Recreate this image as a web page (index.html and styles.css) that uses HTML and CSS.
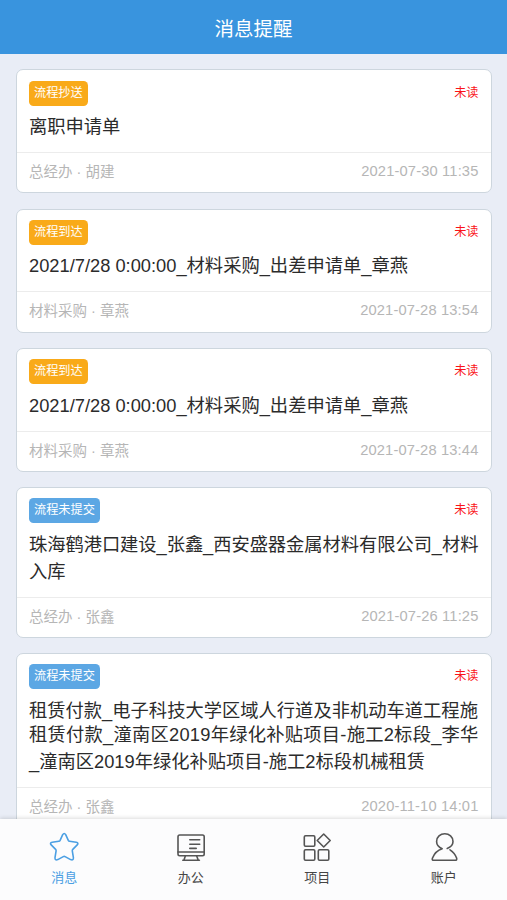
FILE: index.html
```
<!DOCTYPE html>
<html lang="zh-CN">
<head>
<meta charset="utf-8">
<title>消息提醒</title>
<link rel="stylesheet" href="styles.css">
</head>
<body>
<div class="app">
  <header class="header"><h1>消息提醒</h1></header>
  <main class="list">
    <article class="card">
      <div class="body">
        <div class="top"><span class="badge">流程抄送</span><span class="unread">未读</span></div>
        <div class="title"><p>离职申请单</p></div>
      </div>
      <div class="meta"><span>总经办 · 胡建</span><time>2021-07-30 11:35</time></div>
    </article>
    <article class="card">
      <div class="body">
        <div class="top"><span class="badge">流程到达</span><span class="unread">未读</span></div>
        <div class="title"><p>2021/7/28 0:00:00_材料采购_出差申请单_章燕</p></div>
      </div>
      <div class="meta"><span>材料采购 · 章燕</span><time>2021-07-28 13:54</time></div>
    </article>
    <article class="card">
      <div class="body">
        <div class="top"><span class="badge">流程到达</span><span class="unread">未读</span></div>
        <div class="title"><p>2021/7/28 0:00:00_材料采购_出差申请单_章燕</p></div>
      </div>
      <div class="meta"><span>材料采购 · 章燕</span><time>2021-07-28 13:44</time></div>
    </article>
    <article class="card">
      <div class="body">
        <div class="top"><span class="badge blue">流程未提交</span><span class="unread">未读</span></div>
        <div class="title"><p class="dense">珠海鹤港口建设_张鑫_西安盛器金属材料有限公司_材料</p><p>入库</p></div>
      </div>
      <div class="meta"><span>总经办 · 张鑫</span><time>2021-07-26 11:25</time></div>
    </article>
    <article class="card">
      <div class="body">
        <div class="top"><span class="badge blue">流程未提交</span><span class="unread">未读</span></div>
        <div class="title"><p class="tight">租赁付款_电子科技大学区域人行道及非机动车道工程施</p><p class="spread">租赁付款_潼南区2019年绿化补贴项目-施工2标段_李华</p><p>_潼南区2019年绿化补贴项目-施工2标段机械租赁</p></div>
      </div>
      <div class="meta"><span>总经办 · 张鑫</span><time>2020-11-10 14:01</time></div>
    </article>
  </main>
  <nav class="tabs">
    <a class="tab active">
      <svg viewBox="0 0 32 32"><path d="M14.7 3.7Q16.2 1.3 17.7 3.7L20.3 9.3Q20.7 10.1 21.6 10.2L28.2 11.2Q31 11.8 29.2 13.9L24.8 18.4Q24.2 19 24.3 19.8L25.4 26.6Q25.6 29.8 22.6 28.6L17.1 25.6Q16.2 25.1 15.3 25.6L9.8 28.6Q6.8 29.8 7 26.6L8.1 19.8Q8.2 19 7.6 18.4L3.2 13.9Q1.4 11.8 4.2 11.2L10.8 10.2Q11.7 10.1 12.1 9.3Z"/></svg>
      <span>消息</span>
    </a>
    <a class="tab">
      <svg viewBox="0 0 32 32"><rect x="3" y="4" width="26.2" height="20.7" rx="1.7"/><path d="M3 21H29M10.3 25L9 29M21.7 25L23.2 29M7.8 29.3H24.4M14.8 8.8H24.7M14.8 13.2H24.7M14.8 17.4H21.2"/></svg>
      <span>办公</span>
    </a>
    <a class="tab">
      <svg viewBox="0 0 32 32"><rect x="3.3" y="4.7" width="10.5" height="10.5" rx="1.2"/><rect x="3.3" y="18.7" width="10.5" height="10.5" rx="1.2"/><rect x="17.3" y="18.7" width="10.5" height="10.5" rx="1.2"/><path d="M22.7 3L29.2 9.5L22.7 16L16.2 9.5Z"/></svg>
      <span>项目</span>
    </a>
    <a class="tab">
      <svg viewBox="0 0 32 32"><path d="M19.2 17.5C23 16 25 13.5 25 10.5C25 5.8 21.2 2.8 16.8 2.8C12.3 2.8 8.6 6 8.6 10.5C8.6 13.5 10.6 16.2 14.2 17.8C9.5 19.2 6.2 22.8 4.4 27.2Q3.7 29.3 5.8 29.3H27.1Q29.3 29.2 28.6 27.1C27.5 23.7 25.1 20.8 22 18.8"/></svg>
      <span>账户</span>
    </a>
  </nav>
</div>
</body>
</html>
```
FILE: styles.css
```
* { box-sizing: border-box; }
body {
  margin: 0;
  background: #e9edf6;
  font-family: "Liberation Sans", "Noto Sans CJK SC", sans-serif;
}
h1, p { margin: 0; font-weight: 400; }
.app { display: flex; flex-direction: column; height: 900px; overflow: hidden; }
.header {
  flex: none;
  height: 54px;
  background: #3994de;
  color: #fff;
  text-align: center;
}
.header h1 { font-size: 19.5px; line-height: 58px; }
.list {
  flex: 1;
  min-height: 0;
  overflow: hidden;
  display: flex;
  flex-direction: column;
  gap: 15.2px;
  padding: 15.4px 15px 0 15.5px;
}
.card {
  flex: none;
  background: #fff;
  border: 1px solid #cdd6de;
  border-radius: 7px;
}
.body { padding: 10.2px 12.5px 11.2px; }
.top { display: flex; justify-content: space-between; height: 25px; }
.badge {
  height: 25px;
  padding: 0 5px;
  border-radius: 4.5px;
  background: #f9aa19;
  color: #fff;
  font-size: 12.2px;
  line-height: 24px;
  white-space: nowrap;
}
.badge.blue { background: #5ca7e4; }
.unread { color: #fa1418; font-size: 12.2px; line-height: 24px; }
.title { padding-top: 8.6px; color: #2b2b2b; font-size: 18.3px; }
.title p { height: 26.8px; line-height: 26.8px; white-space: nowrap; }
.title .tight { height: 24.4px; }
.title .dense { letter-spacing: -.06px; }
.title .spread { letter-spacing: .24px; }
.meta {
  display: flex;
  justify-content: space-between;
  height: 40.3px;
  padding: 0 12.5px;
  border-top: 1px solid #ececec;
  color: #b6b6b6;
  font-size: 14.5px;
  line-height: 38px;
}
.meta time { font-size: 14.7px; letter-spacing: .15px; line-height: 36px; }
.tabs {
  position: relative;
  flex: none;
  display: flex;
  height: 81px;
  padding-left: 1px;
  background: #fcfcfd;
  box-shadow: 0 -1px 4px rgba(0, 0, 0, .14);
}
.tab {
  flex: 1;
  display: flex;
  flex-direction: column;
  align-items: center;
  padding-top: 12px;
  color: #454545;
  font-size: 13px;
}
.tab svg {
  width: 32px;
  height: 32px;
  fill: none;
  stroke: #555;
  stroke-width: 1.6;
  stroke-linecap: round;
  stroke-linejoin: round;
}
.tab span { margin-top: 5px; line-height: 20px; }
.tab.active { color: #4b9fe3; }
.tab.active svg { stroke: #4b9fe3; }
```
